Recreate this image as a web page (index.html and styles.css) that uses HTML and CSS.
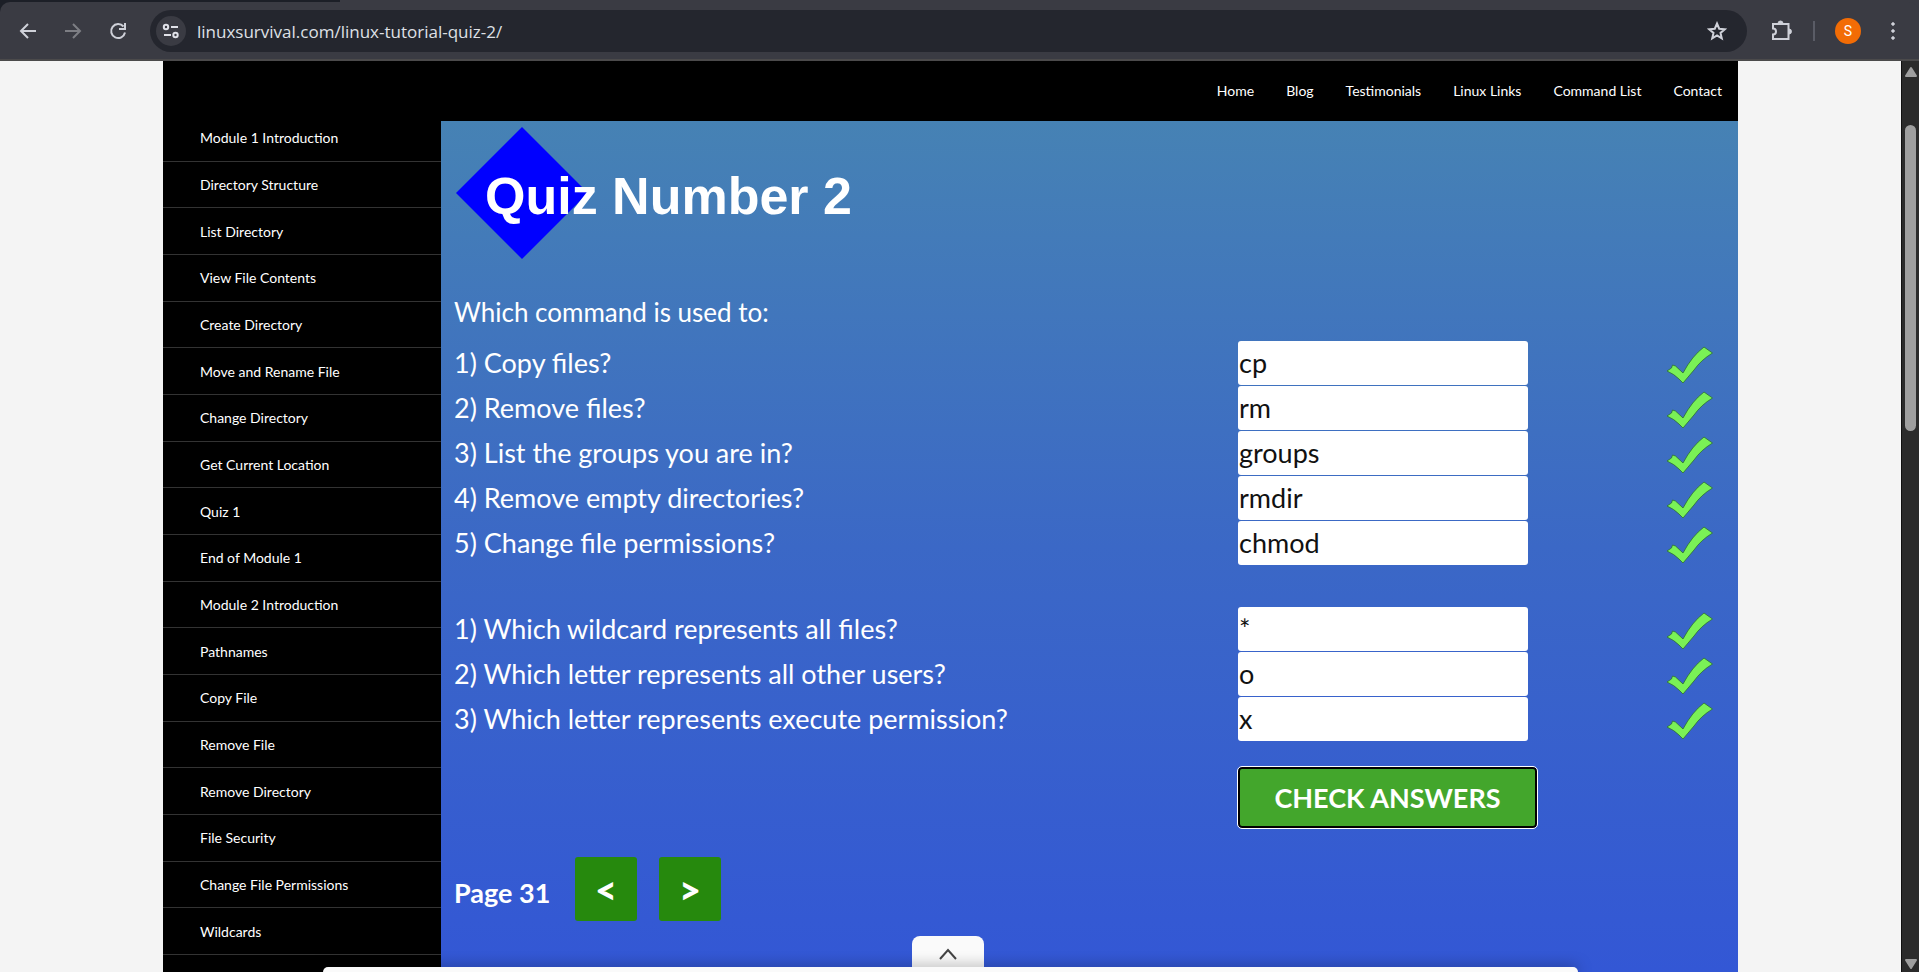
FILE: index.html
```html
<!DOCTYPE html>
<html lang="en">
<head>
<meta charset="utf-8">
<title>Quiz Number 2 - Linux Survival</title>
<link rel="stylesheet" href="styles.css">
</head>
<body>
<svg class="defs" aria-hidden="true">
  <symbol id="tick" viewBox="0 0 48 38">
    <path d="M1 25 L5.500 22 L6.500 19 L9.500 20 L17 27 Q26 10 38 1 L46.500 7 Q35 14 28 24 L17 37 L13 33 Q8 28 1 25 Z" fill="#7af156" stroke="#2c7030" stroke-width="0.8"/>
  </symbol>
</svg>

<header class="browser">
  <div class="toolbar">
    <div class="nav-buttons">
      <button class="tool" aria-label="Back"><svg width="18" height="18" viewBox="0 0 18 18"><path d="M17 9H3M9 2L2 9l7 7"/></svg></button>
      <button class="tool dim" aria-label="Forward"><svg width="18" height="18" viewBox="0 0 18 18"><path d="M1 9h14M9 2l7 7-7 7"/></svg></button>
      <button class="tool" aria-label="Reload"><svg width="18" height="18" viewBox="0 0 18 18"><path d="M14.500 4.500A7 7 0 1 0 16 10.500M16 1v6h-6"/></svg></button>
    </div>
    <div class="omnibox">
      <button class="site-info" aria-label="Site information"><svg width="18" height="16" viewBox="0 0 18 16"><circle cx="4" cy="4" r="2.200"/><path d="M9 4h7M2 12h7"/><circle cx="13.500" cy="12" r="2.200"/></svg></button>
      <input class="url" aria-label="Address" value="linuxsurvival.com/linux-tutorial-quiz-2/">
      <button class="tool" aria-label="Bookmark"><svg width="20" height="20" viewBox="0 0 20 20"><path d="M10 2.500l2.200 5.200 5.600.5-4.300 3.700 1.300 5.500L10 14.500l-4.800 2.900 1.300-5.500-4.300-3.700 5.600-.5z"/></svg></button>
    </div>
    <button class="tool ext" aria-label="Extensions"><svg width="22" height="22" viewBox="0 0 22 22"><path d="M3 4h15.500v15H3v-4.500c4 0 4-6 0-6z"/><path class="solid" d="M8 3.500a2.500 2.500 0 0 1 5 0zM19 9a2.500 2.500 0 0 1 0 5z"/></svg></button>
    <span class="divider"></span>
    <button class="avatar" aria-label="Profile">S</button>
    <button class="tool menu" aria-label="Menu"><svg width="6" height="20" viewBox="0 0 6 20"><circle class="solid" cx="3" cy="3" r="1.300"/><circle class="solid" cx="3" cy="10" r="1.300"/><circle class="solid" cx="3" cy="17" r="1.300"/></svg></button>
  </div>
</header>

<div class="viewport">
  <div class="canvas">
    <div class="site">
      <nav class="top-nav" aria-label="Site">
        <a href="#">Home</a><a href="#">Blog</a><a href="#">Testimonials</a><a href="#">Linux Links</a><a href="#">Command List</a><a href="#">Contact</a>
      </nav>
      <div class="columns">
        <nav class="side-nav" aria-label="Modules">
          <a href="#">Module 1 Introduction</a>
          <a href="#">Directory Structure</a>
          <a href="#">List Directory</a>
          <a href="#">View File Contents</a>
          <a href="#">Create Directory</a>
          <a href="#">Move and Rename File</a>
          <a href="#">Change Directory</a>
          <a href="#">Get Current Location</a>
          <a href="#">Quiz 1</a>
          <a href="#">End of Module 1</a>
          <a href="#">Module 2 Introduction</a>
          <a href="#">Pathnames</a>
          <a href="#">Copy File</a>
          <a href="#">Remove File</a>
          <a href="#">Remove Directory</a>
          <a href="#">File Security</a>
          <a href="#">Change File Permissions</a>
          <a href="#">Wildcards</a>
        </nav>
        <main class="content">
          <div class="banner">
            <svg class="diamond" width="132" height="132" viewBox="0 0 132 132" aria-hidden="true"><path d="M66 0l66 66-66 66L0 66z" fill="#00f"/></svg>
            <h1 class="title">Quiz Number 2</h1>
          </div>
          <p class="prompt">Which command is used to:</p>
          <form class="quiz">
            <div class="group">
              <div class="row"><label for="a1">1) Copy files?</label><input id="a1" value="cp"><svg class="tick" role="img" aria-label="Correct"><use href="#tick"/></svg></div>
              <div class="row"><label for="a2">2) Remove files?</label><input id="a2" value="rm"><svg class="tick" role="img" aria-label="Correct"><use href="#tick"/></svg></div>
              <div class="row"><label for="a3">3) List the groups you are in?</label><input id="a3" value="groups"><svg class="tick" role="img" aria-label="Correct"><use href="#tick"/></svg></div>
              <div class="row"><label for="a4">4) Remove empty directories?</label><input id="a4" value="rmdir"><svg class="tick" role="img" aria-label="Correct"><use href="#tick"/></svg></div>
              <div class="row"><label for="a5">5) Change file permissions?</label><input id="a5" value="chmod"><svg class="tick" role="img" aria-label="Correct"><use href="#tick"/></svg></div>
            </div>
            <div class="group">
              <div class="row"><label for="b1">1) Which wildcard represents all files?</label><input id="b1" value="*"><svg class="tick" role="img" aria-label="Correct"><use href="#tick"/></svg></div>
              <div class="row"><label for="b2">2) Which letter represents all other users?</label><input id="b2" value="o"><svg class="tick" role="img" aria-label="Correct"><use href="#tick"/></svg></div>
              <div class="row"><label for="b3">3) Which letter represents execute permission?</label><input id="b3" value="x"><svg class="tick" role="img" aria-label="Correct"><use href="#tick"/></svg></div>
            </div>
            <div class="row submit"><button class="check" type="button">CHECK ANSWERS</button></div>
          </form>
          <div class="pager">
            <span class="page">Page 31</span>
            <button class="step" aria-label="Previous page">&lt;</button>
            <button class="step" aria-label="Next page">&gt;</button>
          </div>
        </main>
      </div>
    </div>
    <div class="drawer">
      <button class="drawer-tab" aria-label="Expand"><svg width="18" height="12" viewBox="0 0 18 12"><path d="M1 11l8-9 8 9"/></svg></button>
      <div class="drawer-bar"></div>
    </div>
  </div>
  <div class="scrollbar" aria-hidden="true">
    <svg width="14" height="12" viewBox="0 0 14 12"><path d="M7 2l5 8H2z"/></svg>
    <div class="track"><div class="thumb"></div></div>
    <svg width="14" height="12" viewBox="0 0 14 12"><path d="M2 2h10L7 10z"/></svg>
  </div>
</div>
</body>
</html>
```

FILE: styles.css
```css
* { box-sizing: border-box; }
body {
  margin: 0;
  height: 100vh;
  display: flex;
  flex-direction: column;
  overflow: hidden;
  background: #1f2128;
  font-family: Lato, sans-serif;
}
button { font: inherit; border: 0; padding: 0; cursor: pointer; }
a { color: inherit; text-decoration: none; }
.defs { position: absolute; width: 0; height: 0; }

/* Browser toolbar */
.browser { flex: none; padding-top: 2px; background: linear-gradient(90deg, #1c1f27 340px, #3a3b43 340px); }
.toolbar {
  display: flex;
  align-items: center;
  height: 59px;
  padding: 0 18px 0 19px;
  border-bottom: 2px solid #4b4a4b;
  border-radius: 10px 10px 0 0;
  background: #3a3b43;
}
.nav-buttons { display: flex; gap: 27px; margin-right: 23px; }
.tool { display: flex; background: none; color: #cfd1d9; }
.tool svg, .site-info svg, .drawer-tab svg { fill: none; stroke: currentColor; stroke-width: 2; }
.tool .solid { fill: currentColor; stroke-width: 1; }
.dim { color: #7d7e84; }
.omnibox {
  flex: 1;
  display: flex;
  align-items: center;
  height: 42px;
  padding: 0 20px 0 6px;
  border-radius: 21px;
  background: #24262e;
}
.site-info {
  display: grid;
  place-items: center;
  width: 30px;
  height: 30px;
  border-radius: 50%;
  background: #3a3b43;
  color: #e0e1e8;
}
.url {
  flex: 1;
  min-width: 0;
  padding: 2px 0 0;
  margin-left: 11px;
  border: 0;
  background: none;
  color: #dfe0e6;
  font: 17px "Open Sans", sans-serif;
}
.ext { margin-left: 23px; }
.divider { width: 2px; height: 20px; margin: 0 20px 0 21px; background: #5a5c66; }
.avatar {
  width: 26px;
  height: 26px;
  border-radius: 50%;
  background: #f26c05;
  color: #fff;
  font: 14px Roboto, sans-serif;
}
.menu { margin: 0 5px 0 29px; }

/* Page */
.viewport { flex: 1; display: flex; min-height: 0; }
.canvas { position: relative; flex: 1; padding: 0 163px; overflow: hidden; background: #f4f4f4; }
.site { display: flex; flex-direction: column; height: 100%; background: #000; color: #fff; }
.top-nav {
  flex: none;
  display: flex;
  justify-content: flex-end;
  gap: 32px;
  height: 54px;
  padding: 20px 16px 0;
  font-size: 14px;
  line-height: 20px;
}
.columns { flex: 1; display: grid; grid-template-columns: 278px 1fr; min-height: 0; }
.side-nav { display: grid; grid-auto-rows: 1fr; height: 840px; font-size: 14px; }
.side-nav a { display: flex; align-items: center; padding-left: 37px; border-bottom: 1px solid #333; }
.content {
  margin-top: 6px;
  padding: 6px 24px 0 13px;
  background: linear-gradient(#4682b4, #3b68c6 50%, #3357d5);
  font-size: 27px;
}
.banner { position: relative; height: 134px; padding: 0 2px; }
.diamond { display: block; }
.title {
  position: absolute;
  left: 31px;
  top: 39px;
  margin: 0;
  font: bold 52px/60px "Liberation Sans", Arial, sans-serif;
}
.prompt { margin: 31px 0 8px; font-size: 26px; line-height: 40px; }
.group { margin-bottom: 41px; }
.row { display: grid; grid-template-columns: minmax(0, 1fr) 290px 186px; align-items: center; height: 45px; }
.row input {
  width: 100%;
  height: 44px;
  padding: 0 1px;
  border: 0;
  border-radius: 3px;
  background: #fff;
  color: #111;
  font: 27px Lato, sans-serif;
}
.tick { justify-self: end; width: 48px; height: 38px; margin-top: 5px; }
.submit { height: 62px; margin-top: -16px; }
.check {
  grid-column: 2 / 4;
  justify-self: start;
  width: 299px;
  height: 61px;
  border: 2px solid #000;
  border-radius: 4px;
  outline: 1px solid #fff;
  background: #43a62c;
  color: #fff;
  font-weight: bold;
}
.pager { display: flex; align-items: center; margin-top: 29px; }
.page { width: 121px; padding-top: 6px; font-weight: bold; }
.step {
  width: 62px;
  height: 64px;
  margin-right: 22px;
  border-radius: 3px;
  background: #26890d;
  color: #fff;
  font-weight: 900;
  font-size: 38px;
  line-height: 60px;
}

/* Bottom drawer, floating over the page */
.drawer { position: absolute; left: 17%; right: 17%; bottom: 0; display: flex; flex-direction: column; align-items: center; }
.drawer-tab {
  display: grid;
  place-items: center;
  width: 72px;
  height: 31px;
  margin-right: 5px;
  padding-top: 4px;
  border-radius: 8px 8px 0 0;
  background: #fafafa;
  color: #444;
}
.drawer-bar { width: 100%; height: 5px; border-radius: 6px 6px 0 0; background: #fafafa; box-shadow: 0 0 14px rgba(0, 0, 0, .5); }

.scrollbar {
  display: flex;
  flex-direction: column;
  align-items: center;
  width: 18px;
  padding: 5px 0 2px;
  border-left: 1px solid #111;
  background: #2b2b2b;
}
.scrollbar svg { flex: none; fill: #9f9f9f; stroke: #9f9f9f; stroke-width: 2; stroke-linejoin: round; }
.track { flex: 1; padding: 47px 0; }
.thumb { width: 11px; height: 38%; min-height: 306px; border-radius: 6px; background: #9f9f9f; }
```
